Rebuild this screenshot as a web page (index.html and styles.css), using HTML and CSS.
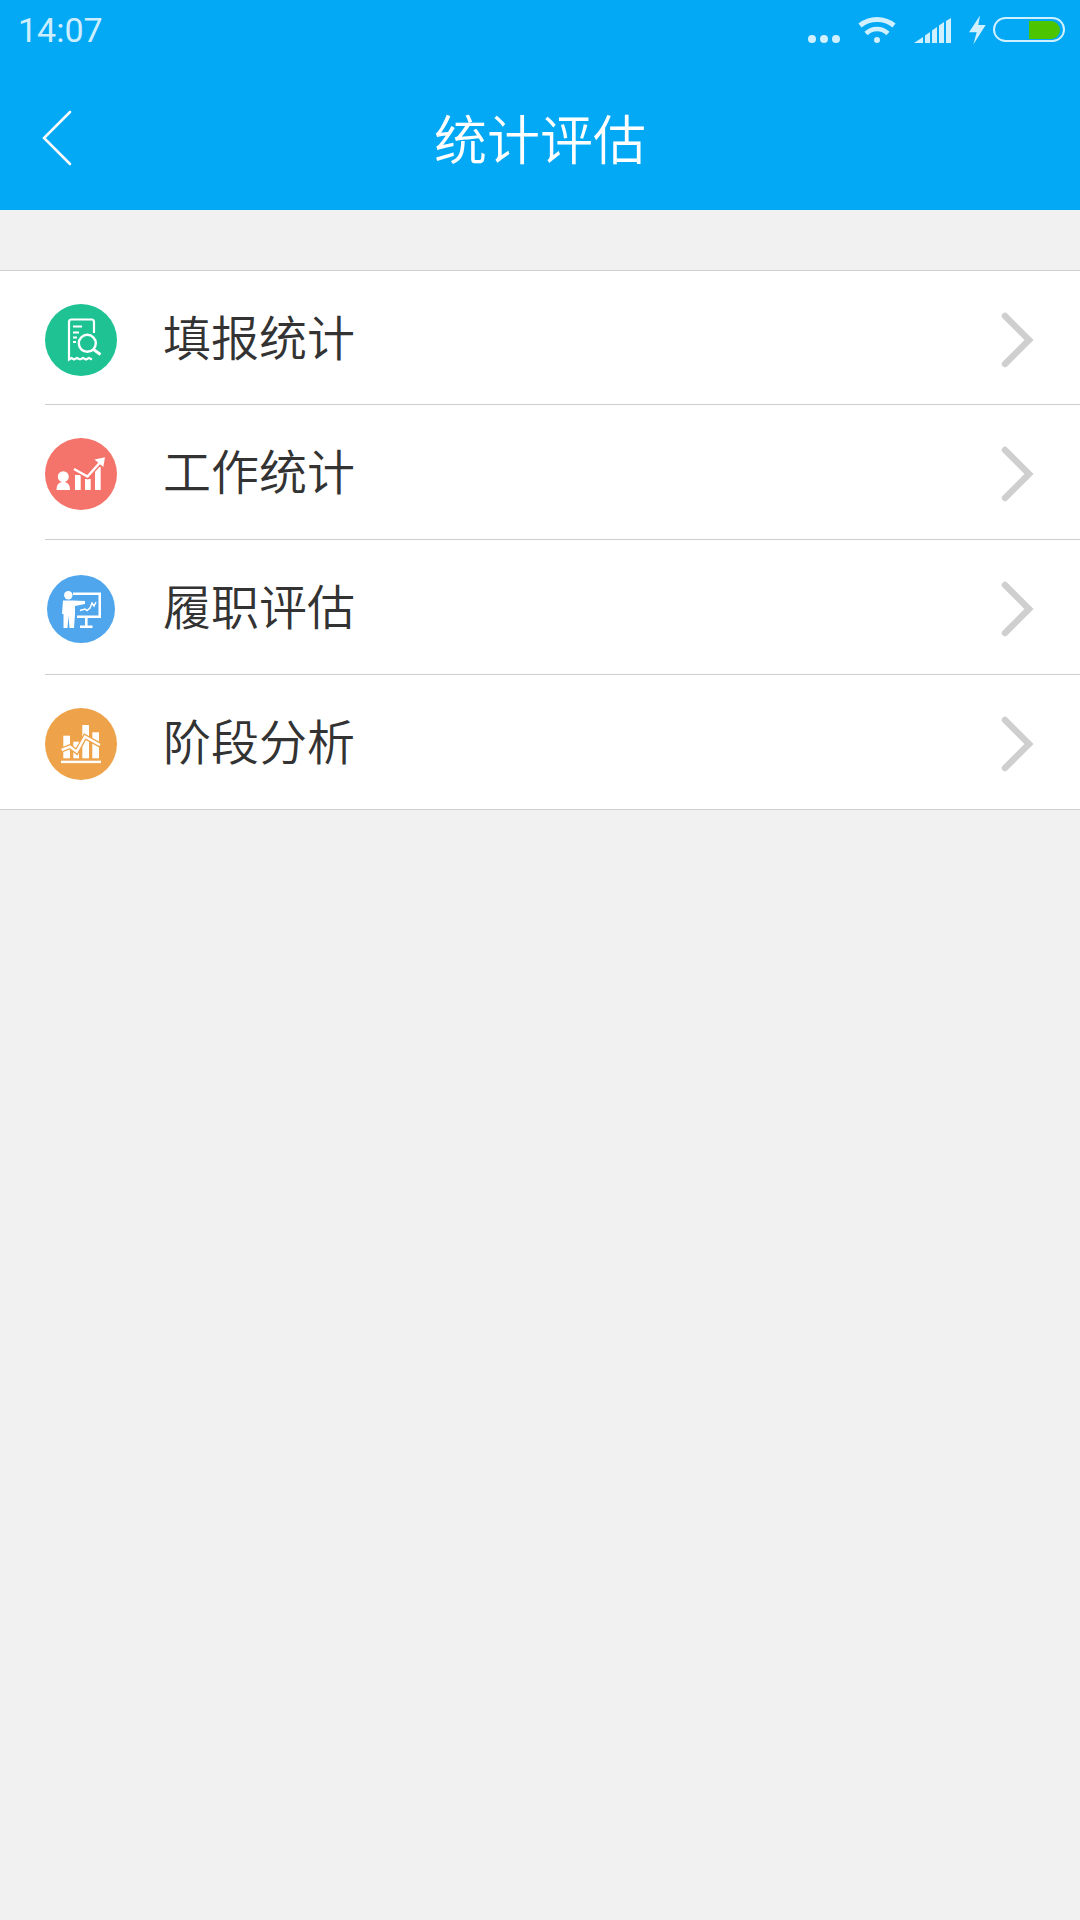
FILE: index.html
```html
<!DOCTYPE html>
<html lang="zh-CN">
<head>
    <meta charset="UTF-8">
    <meta name="viewport" content="width=device-width, initial-scale=1.0">
    <title>统计评估</title>
    <link rel="stylesheet" href="styles.css">
</head>
<body>
    <header class="header">
        <div class="status-bar">
            <span class="time">14:07</span>
            <div class="status-icons">
                <svg class="icon-dots" width="32" height="8" viewBox="0 0 32 8"><circle cx="4" cy="4" r="4"/><circle cx="16" cy="4" r="4"/><circle cx="28" cy="4" r="4"/></svg>
                <svg class="icon-wifi" width="40" height="28" viewBox="0 0 40 28" fill="none">
                    <path d="M3 10.500A27 27 0 0 1 37 10.500" stroke-width="5"/>
                    <path d="M9 18.500A15.700 15.700 0 0 1 31 18.500" stroke-width="4.600"/>
                    <circle class="wifi-dot" cx="20" cy="25" r="3"/>
                </svg>
                <svg class="icon-signal" width="37" height="25" viewBox="0 0 37 25">
                    <path d="M0 25L9 19V25Z"/>
                    <path d="M11 25V17.500L16 14V25Z"/>
                    <path d="M18 25V12.500L23 9V25Z"/>
                    <path d="M25 25V7.500L30 4V25Z"/>
                    <path d="M32 25V3L37 0V25Z"/>
                </svg>
                <svg class="icon-bolt" width="17" height="30" viewBox="0 0 17 30"><path d="M11 0.500L0 17.300H7.700L4.300 29.500L16.700 10H9.300Z"/></svg>
                <div class="battery"><div class="battery-level"></div></div>
            </div>
        </div>
        <div class="title-bar">
            <svg class="back" width="30" height="56" viewBox="0 0 30 56" fill="none"><path d="M28 2L2 28L28 54"/></svg>
            <h1>统计评估</h1>
        </div>
    </header>

    <ul class="menu">
        <li class="menu-item">
            <span class="menu-icon green">
                <svg width="72" height="72" viewBox="0 0 72 72" fill="none">
                    <path d="M35 55.500L32 54L29 55.500L26.500 54L24 55.500V18C24 16.500 25 15.500 26.500 15.500H46.500C48 15.500 49 16.500 49 18V29" stroke-width="2.200"/>
                    <path d="M35 55.500L38 54L41 55.500L44 54L47 55.500" stroke-width="2.200"/>
                    <path d="M28 22.500H37M28 28.500H34M28 33.500H32M28 38H31" stroke-width="2.200"/>
                    <circle cx="42.300" cy="39.300" r="8.500" stroke-width="2.400"/>
                    <path d="M48.500 45.500L55.500 50.500" stroke-width="2.800"/>
                </svg>
            </span>
            <span class="menu-label">填报统计</span>
            <svg class="arrow" width="34" height="56" viewBox="0 0 34 56" fill="none"><path d="M4 4L28 28L4 52"/></svg>
        </li>
        <li class="menu-item">
            <span class="menu-icon red">
                <svg width="72" height="72" viewBox="0 0 72 72" fill="#fff">
                    <circle cx="18.300" cy="38.700" r="5.500"/>
                    <path d="M11.500 52C11.500 46.500 14 44 18.300 44C22.500 44 25 46.500 25 52Z"/>
                    <rect x="30" y="37" width="5.700" height="15"/>
                    <rect x="40" y="41" width="5.700" height="11"/>
                    <rect x="50" y="29" width="5.700" height="23"/>
                    <path class="cut" d="M29 31L42.500 38.500L55 24.500"/>
                    <path class="line" d="M29 31L42.500 38.500L55 24.500"/>
                    <path d="M49.500 21.500L60 19.300L58.300 29Z"/>
                </svg>
            </span>
            <span class="menu-label">工作统计</span>
            <svg class="arrow" width="34" height="56" viewBox="0 0 34 56" fill="none"><path d="M4 4L28 28L4 52"/></svg>
        </li>
        <li class="menu-item">
            <span class="menu-icon blue">
                <svg width="68" height="68" viewBox="0 0 68 68" fill="#fff">
                    <circle cx="21.300" cy="20.300" r="4.200"/>
                    <path d="M16 25.500H26L38 26V29L28 31V39L27 53H22.500L21.500 41L20.500 53H16.500V39H15Z"/>
                    <path d="M26 17.500H54V43H30V40.500H51.500V20H26Z"/>
                    <rect x="38" y="43" width="2.600" height="8"/>
                    <rect x="33" y="50.500" width="12.500" height="2.500"/>
                    <path class="thin" d="M33 35.500L38 34L40 35.500L43 33L45 28L47 31L49 27"/>
                </svg>
            </span>
            <span class="menu-label">履职评估</span>
            <svg class="arrow" width="34" height="56" viewBox="0 0 34 56" fill="none"><path d="M4 4L28 28L4 52"/></svg>
        </li>
        <li class="menu-item">
            <span class="menu-icon orange">
                <svg width="72" height="72" viewBox="0 0 72 72" fill="#fff">
                    <rect x="16" y="52.700" width="40" height="2.400"/>
                    <rect x="18.300" y="27.700" width="6.700" height="22.600"/>
                    <rect x="28.300" y="33.700" width="5.700" height="16.600"/>
                    <rect x="37.300" y="17" width="6.700" height="33.300"/>
                    <rect x="47.300" y="24.300" width="6.700" height="26"/>
                    <path class="cut" d="M16.700 42L25 38.700L31.700 43.700L40 28.700L55 37"/>
                    <path class="line" d="M16.700 42L25 38.700L31.700 43.700L40 28.700L55 37"/>
                </svg>
            </span>
            <span class="menu-label">阶段分析</span>
            <svg class="arrow" width="34" height="56" viewBox="0 0 34 56" fill="none"><path d="M4 4L28 28L4 52"/></svg>
        </li>
    </ul>
</body>
</html>
```

FILE: styles.css
```css
body {
    margin: 0;
    min-height: 1920px;
    background-color: #f1f1f1;
    font-family: "Noto Sans CJK SC", "Noto Sans", sans-serif;
}
.header {
    height: 210px;
    background-color: #03a9f5;
    color: #fff;
}
.status-bar {
    display: flex;
    justify-content: space-between;
    height: 60px;
    padding: 0 15px 0 18px;
}
.time {
    font-family: Roboto, sans-serif;
    font-weight: 400;
    font-size: 34px;
    line-height: 61px;
    color: #cdeefe;
}
.status-icons {
    display: flex;
    align-items: flex-start;
}
.status-icons svg {
    fill: #d0f0ff;
}
.icon-dots {
    margin-top: 35px;
}
.icon-wifi {
    margin: 15px 0 0 17px;
}
.icon-wifi path {
    fill: none;
    stroke: #d0f0ff;
}
.icon-signal {
    margin: 18px 0 0 17px;
}
.icon-bolt {
    margin: 15px 0 0 18px;
}
.battery {
    box-sizing: border-box;
    width: 72px;
    height: 25px;
    margin: 17px 0 0 7px;
    padding: 2px 2px 1px;
    border: 2px solid #d0f0ff;
    border-radius: 13px;
    display: flex;
    justify-content: flex-end;
}
.battery-level {
    width: 31px;
    height: 18px;
    margin-right: 1px;
    background-color: #4cc500;
    border-radius: 0 9px 9px 0;
}
.title-bar {
    position: relative;
    display: flex;
    align-items: center;
    justify-content: center;
    height: 150px;
}
.title-bar h1 {
    margin: 4px 0 0;
    font-size: 53px;
    font-weight: 350;
    line-height: 1;
}
.back {
    position: absolute;
    left: 42px;
    top: 50px;
}
.back path {
    stroke: #fff;
    stroke-width: 2.500;
    stroke-linecap: round;
}
.menu {
    list-style: none;
    margin: 60px 0 0;
    padding: 0;
    background-color: #fff;
    border-top: 1px solid #cfcfcf;
    border-bottom: 1px solid #cfcfcf;
}
.menu-item {
    display: flex;
    align-items: center;
    box-sizing: border-box;
    height: 135px;
    margin-left: 45px;
    padding-right: 45px;
    border-bottom: 1px solid #cfcfcf;
}
.menu-item:first-child {
    height: 134px;
}
.menu-item:last-child {
    border-bottom: none;
    height: 134px;
}
.menu-icon {
    width: 72px;
    height: 72px;
    margin-top: 4px;
    border-radius: 50%;
    flex: none;
    filter: blur(0.4px);
}
.menu-icon svg {
    display: block;
}
.green {
    background-color: #1fc393;
}
.green path,
.green circle {
    stroke: #fff;
}
.red {
    background-color: #f4736a;
}
.blue {
    width: 68px;
    height: 68px;
    margin-left: 2px;
    margin-right: 2px;
    background-color: #50a6ec;
}
.orange {
    background-color: #eea34b;
}
.cut {
    fill: none;
    stroke-width: 5;
}
.red .cut {
    stroke: #f4736a;
}
.orange .cut {
    stroke: #eea34b;
}
.line {
    fill: none;
    stroke: #fff;
    stroke-width: 2.500;
}
.thin {
    fill: none;
    stroke: #fff;
    stroke-width: 1.500;
}
.menu-label {
    flex: 1;
    margin-left: 46px;
    margin-bottom: 6px;
    font-size: 48px;
    font-weight: 350;
    line-height: 1;
    color: #333;
}
.arrow {
    margin-top: 4px;
    filter: blur(0.4px);
}
.arrow path {
    stroke: #cfcfcf;
    stroke-width: 6.500;
    stroke-linecap: round;
}
```
